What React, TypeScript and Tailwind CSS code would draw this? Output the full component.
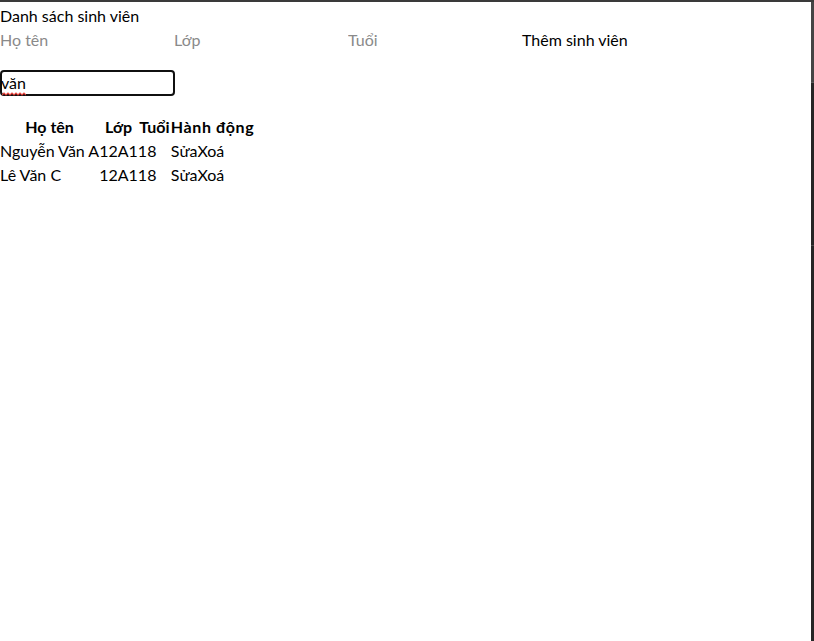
import React from "react";

const students = [
  { name: "Nguyễn Văn A", cls: "12A1", age: 18 },
  { name: "Lê Văn C", cls: "12A1", age: 18 },
];

export default function App() {
  return (
    <div className="w-[814px] h-[641px] flex flex-col bg-[#3a3a3a] overflow-hidden">
      <div className="h-[2px] bg-[#3a3a3a]" />
      <div className="flex flex-1 min-h-0">
        <div
          className="flex-1 bg-white text-black text-base"
          style={{ fontFamily: "Lato, 'Liberation Sans', sans-serif" }}
        >
          <div className="h-6 leading-[27px]">Danh sách sinh viên</div>
          <div className="flex h-[27px] items-center">
            <input
              className="w-[174px] h-[26px] outline-none placeholder:text-[#8a8a8a] p-0 bg-transparent"
              placeholder="Họ tên"
            />
            <input
              className="w-[174px] h-[26px] outline-none placeholder:text-[#8a8a8a] p-0 bg-transparent"
              placeholder="Lớp"
            />
            <input
              className="w-[174px] h-[26px] outline-none placeholder:text-[#8a8a8a] p-0 bg-transparent"
              placeholder="Tuổi"
            />
            <button className="h-[26px] p-0 bg-transparent">Thêm sinh viên</button>
          </div>
          <div className="mt-[17px] w-[175px] h-[26px] border-2 border-[#101010] rounded-[4px] flex items-center">
            <span className="relative leading-5 -ml-[1px]">
              văn
              <svg
                className="absolute left-[1px] top-[19px]"
                width="24"
                height="4"
                viewBox="0 0 24 4"
              >
                <path
                  d="M0 3 L2 1 L4 3 L6 1 L8 3 L10 1 L12 3 L14 1 L16 3 L18 1 L20 3 L22 1 L24 3"
                  fill="none"
                  stroke="#e8403a"
                  strokeWidth="1.2"
                />
              </svg>
            </span>
          </div>
          <table className="mt-[19px] border-collapse">
            <thead>
              <tr className="h-6">
                <th className="w-[98px] p-0 font-bold text-center">Họ tên</th>
                <th className="w-[36px] p-0 font-bold text-center">Lớp</th>
                <th className="w-[33px] p-0 font-bold text-center">Tuổi</th>
                <th className="w-[87px] p-0 font-bold text-left tracking-[0.6px]">Hành động</th>
              </tr>
            </thead>
            <tbody>
              {students.map((s, i) => (
                <tr key={i} className="h-6">
                  <td className="p-0 whitespace-nowrap">{s.name}</td>
                  <td className="p-0">{s.cls}</td>
                  <td className="p-0">{s.age}</td>
                  <td className="p-0">
                    <button className="p-0 bg-transparent">Sửa</button>
                    <button className="p-0 bg-transparent">Xoá</button>
                  </td>
                </tr>
              ))}
            </tbody>
          </table>
        </div>
        <div className="w-[3px] flex flex-col">
          <div className="h-[80px] bg-[#454545]" />
          <div className="h-[1px] bg-[#5a5a5a]" />
          <div className="h-[162px] bg-[#262626]" />
          <div className="h-[1px] bg-[#4a4a4a]" />
          <div className="flex-1 bg-[#262626]" />
        </div>
      </div>
    </div>
  );
}
